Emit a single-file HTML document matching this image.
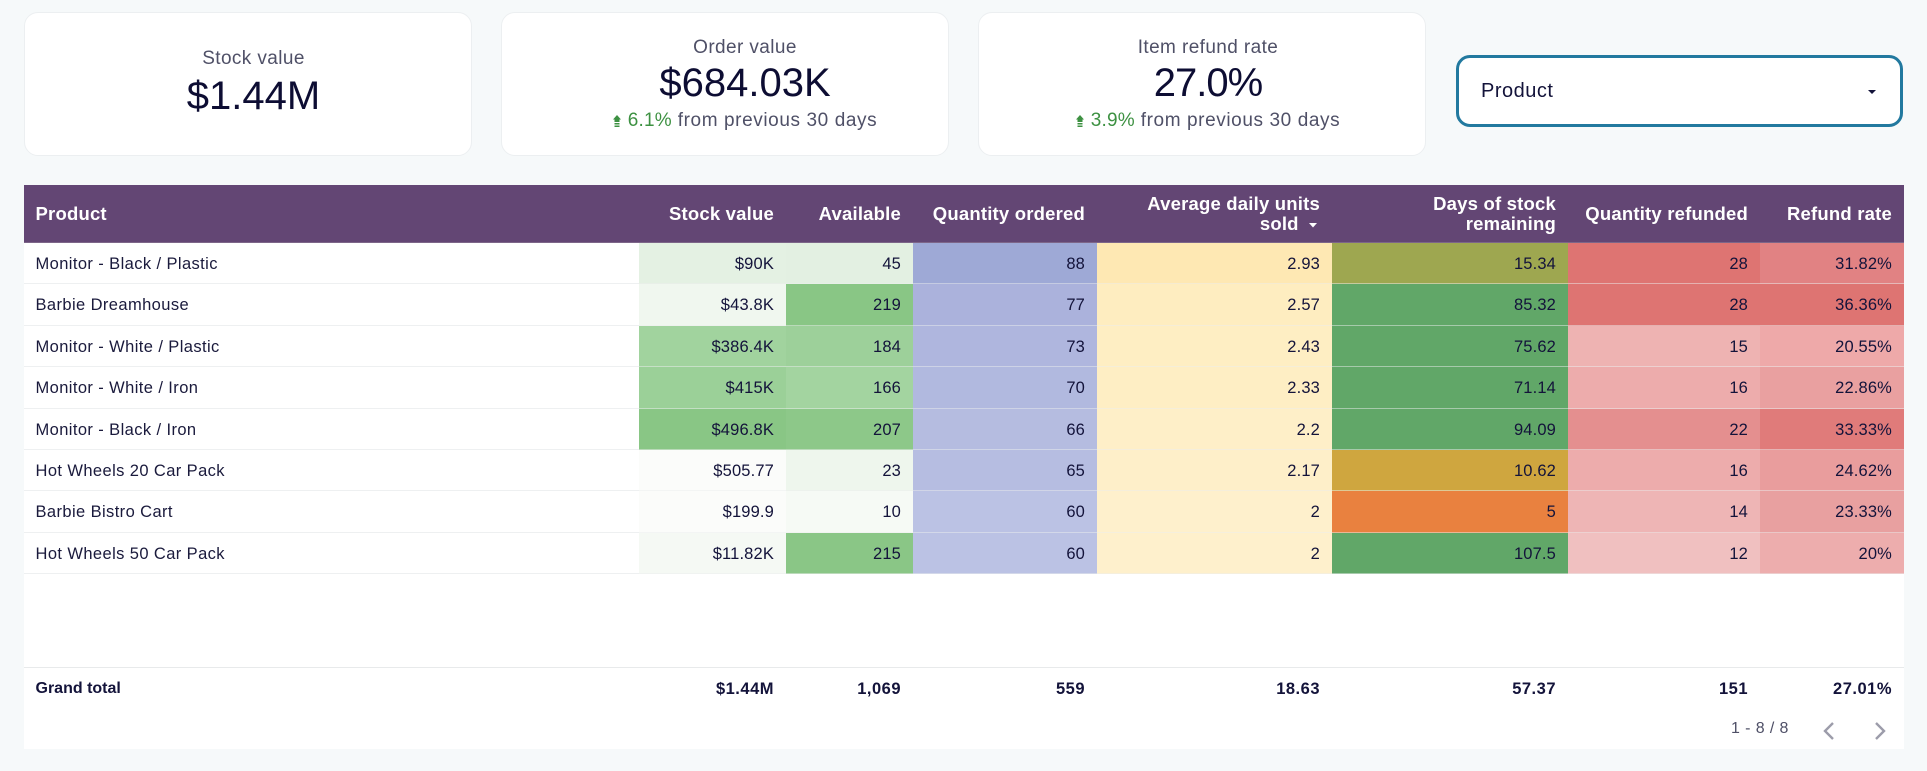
<!DOCTYPE html>
<html><head><meta charset="utf-8"><style>
*{box-sizing:border-box}
html,body{margin:0;padding:0;width:1927px;height:771px;overflow:hidden;background:#f6f9fa;font-family:"Liberation Sans",sans-serif;color:#13133a}
.card{position:absolute;top:12px;height:144px;background:#fff;border:1px solid #eceff1;border-radius:14px;text-align:center}
.card div{position:absolute;left:0;right:0;white-space:nowrap;padding-left:var(--o)}
.lb{font-size:19px;letter-spacing:.4px;line-height:22px;color:#4f5067}
.val{font-size:40px;line-height:46px;color:#0d0d33}
.sub{font-size:19px;letter-spacing:.6px;line-height:22px;color:#4f5067}
.sub b{font-weight:400;color:#3d9142;letter-spacing:.2px}
.sub svg{vertical-align:-2px;margin-right:7px}
#drop{position:absolute;left:1456px;top:55px;width:447px;height:72px;background:#fff;border:3px solid #22799f;border-radius:14px}
#drop span{position:absolute;left:22px;top:22px;font-size:20px;letter-spacing:.5px;line-height:22px;color:#13133a}
#drop i{position:absolute;left:409px;top:32px;border:4px solid transparent;border-top-color:#13133a;border-bottom:0}
#tb{position:absolute;left:24px;top:185px;width:1880px;height:564px;background:#fff}
.c{position:absolute;white-space:nowrap;text-align:right;font-size:16.5px;letter-spacing:.15px}
.r{position:absolute;left:0;width:1880px;height:41.4px}
.r .c{top:0;height:41.4px;line-height:42px;padding-right:12px;border-bottom:1px solid rgba(235,238,238,.5)}
.r .c:first-child{text-align:left;padding-left:11.5px;color:#1a1a3c;letter-spacing:.4px;border-bottom-color:#eef0f1}
#hd{position:absolute;left:0;top:0;width:1880px;height:58px;background:#634674;border-bottom:1px solid #7d6689}
#hd .c{top:0;height:57px;display:flex;align-items:center;justify-content:flex-end;text-align:right;color:#fff;font-weight:700;font-size:18.5px;line-height:20px;padding-right:12px;white-space:normal;letter-spacing:.2px}
#hd .c:first-child{justify-content:flex-start;padding-left:11.5px}
#tot{position:absolute;left:0;top:482px;width:1880px;height:42px;border-top:1px solid #e8eaeb}
#tot .c{top:0;height:40px;line-height:42px;font-weight:700;font-size:16.5px;padding-right:12px;color:#13133a;letter-spacing:.5px}
#tot .c:first-child{text-align:left;padding-left:11.5px;letter-spacing:0;font-size:16px}
.p{position:absolute;font-size:16px;letter-spacing:.4px;line-height:20px;color:#4f5067}
</style></head><body>

<div class="card" style="left:24px;width:448px;--o:11px"><div class="lb" style="top:35px">Stock value</div><div class="val" style="top:60px">$1.44M</div></div>

<div class="card" style="left:501px;width:448px;--o:40px"><div class="lb" style="top:24px">Order value</div><div class="val" style="top:47px">$684.03K</div><div class="sub" style="top:97px"><svg width="8" height="13" viewBox="0 0 8 13"><path d="M4 0l4 4.5H6.5V7h-5V4.5H0zM1.5 8h5v1.5h-5zM1.5 10.5h5V12h-5z" fill="#3d9142"/></svg><b>6.1%</b> from previous 30 days</div></div>

<div class="card" style="left:978px;width:448px;--o:12px"><div class="lb" style="top:24px">Item refund rate</div><div class="val" style="top:47px;letter-spacing:-1px">27.0%</div><div class="sub" style="top:97px"><svg width="8" height="13" viewBox="0 0 8 13"><path d="M4 0l4 4.5H6.5V7h-5V4.5H0zM1.5 8h5v1.5h-5zM1.5 10.5h5V12h-5z" fill="#3d9142"/></svg><b>3.9%</b> from previous 30 days</div></div>

<div id="drop"><span>Product</span><i></i></div>

<div id="tb">
<div id="hd">
<div class="c" style="left:0;width:615px">Product</div>
<div class="c" style="left:615px;width:147px">Stock value</div>
<div class="c" style="left:762px;width:127px">Available</div>
<div class="c" style="left:889px;width:184px">Quantity ordered</div>
<div class="c" style="left:1073px;width:235px"><span>Average daily units<br>sold <svg width="8" height="5" viewBox="0 0 8 5" style="margin:0 3px 2px 5px"><path d="M0 0h8L4 4.5z" fill="#fff"/></svg></span></div>
<div class="c" style="left:1308px;width:236px"><span>Days of stock<br>remaining</span></div>
<div class="c" style="left:1544px;width:192px">Quantity refunded</div>
<div class="c" style="left:1736px;width:144px">Refund rate</div>
</div>

<div class="r" style="top:58px">
<div class="c" style="left:0;width:615px">Monitor - Black / Plastic</div>
<div class="c" style="left:615px;width:147px;background:#e4f1e3">$90K</div>
<div class="c" style="left:762px;width:127px;background:#e3f0e2">45</div>
<div class="c" style="left:889px;width:184px;background:#9ea9d6">88</div>
<div class="c" style="left:1073px;width:235px;background:#fee8b3">2.93</div>
<div class="c" style="left:1308px;width:236px;background:#9ea750">15.34</div>
<div class="c" style="left:1544px;width:192px;background:#de7472">28</div>
<div class="c" style="left:1736px;width:144px;background:#e18283">31.82%</div>
</div>
<div class="r" style="top:99.4px">
<div class="c" style="left:0;width:615px">Barbie Dreamhouse</div>
<div class="c" style="left:615px;width:147px;background:#f0f7ef">$43.8K</div>
<div class="c" style="left:762px;width:127px;background:#89c685">219</div>
<div class="c" style="left:889px;width:184px;background:#abb2dc">77</div>
<div class="c" style="left:1073px;width:235px;background:#feedc0">2.57</div>
<div class="c" style="left:1308px;width:236px;background:#61a768">85.32</div>
<div class="c" style="left:1544px;width:192px;background:#de7472">28</div>
<div class="c" style="left:1736px;width:144px;background:#de7472">36.36%</div>
</div>
<div class="r" style="top:140.8px">
<div class="c" style="left:0;width:615px">Monitor - White / Plastic</div>
<div class="c" style="left:615px;width:147px;background:#a1d39e">$386.4K</div>
<div class="c" style="left:762px;width:127px;background:#9dd09a">184</div>
<div class="c" style="left:889px;width:184px;background:#afb6de">73</div>
<div class="c" style="left:1073px;width:235px;background:#feeec3">2.43</div>
<div class="c" style="left:1308px;width:236px;background:#61a768">75.62</div>
<div class="c" style="left:1544px;width:192px;background:#eeb3b2">15</div>
<div class="c" style="left:1736px;width:144px;background:#eea9a9">20.55%</div>
</div>
<div class="r" style="top:182.2px">
<div class="c" style="left:0;width:615px">Monitor - White / Iron</div>
<div class="c" style="left:615px;width:147px;background:#9bd098">$415K</div>
<div class="c" style="left:762px;width:127px;background:#a3d4a0">166</div>
<div class="c" style="left:889px;width:184px;background:#b1b9df">70</div>
<div class="c" style="left:1073px;width:235px;background:#feeec4">2.33</div>
<div class="c" style="left:1308px;width:236px;background:#61a768">71.14</div>
<div class="c" style="left:1544px;width:192px;background:#edacac">16</div>
<div class="c" style="left:1736px;width:144px;background:#e9a0a0">22.86%</div>
</div>
<div class="r" style="top:223.6px">
<div class="c" style="left:0;width:615px">Monitor - Black / Iron</div>
<div class="c" style="left:615px;width:147px;background:#89c685">$496.8K</div>
<div class="c" style="left:762px;width:127px;background:#8dc889">207</div>
<div class="c" style="left:889px;width:184px;background:#b5bce0">66</div>
<div class="c" style="left:1073px;width:235px;background:#feefc8">2.2</div>
<div class="c" style="left:1308px;width:236px;background:#61a768">94.09</div>
<div class="c" style="left:1544px;width:192px;background:#e48f8f">22</div>
<div class="c" style="left:1736px;width:144px;background:#e07b7a">33.33%</div>
</div>
<div class="r" style="top:265px">
<div class="c" style="left:0;width:615px">Hot Wheels 20 Car Pack</div>
<div class="c" style="left:615px;width:147px;background:#fbfcfa">$505.77</div>
<div class="c" style="left:762px;width:127px;background:#eef6ed">23</div>
<div class="c" style="left:889px;width:184px;background:#b6bde1">65</div>
<div class="c" style="left:1073px;width:235px;background:#feefc9">2.17</div>
<div class="c" style="left:1308px;width:236px;background:#cfa63f">10.62</div>
<div class="c" style="left:1544px;width:192px;background:#edacac">16</div>
<div class="c" style="left:1736px;width:144px;background:#e99d9d">24.62%</div>
</div>
<div class="r" style="top:306.4px">
<div class="c" style="left:0;width:615px">Barbie Bistro Cart</div>
<div class="c" style="left:615px;width:147px;background:#fbfcfa">$199.9</div>
<div class="c" style="left:762px;width:127px;background:#f6faf5">10</div>
<div class="c" style="left:889px;width:184px;background:#bbc2e4">60</div>
<div class="c" style="left:1073px;width:235px;background:#fef0cc">2</div>
<div class="c" style="left:1308px;width:236px;background:#e9813f">5</div>
<div class="c" style="left:1544px;width:192px;background:#eeb5b5">14</div>
<div class="c" style="left:1736px;width:144px;background:#e8a0a0">23.33%</div>
</div>
<div class="r" style="top:347.8px">
<div class="c" style="left:0;width:615px">Hot Wheels 50 Car Pack</div>
<div class="c" style="left:615px;width:147px;background:#f5f9f4">$11.82K</div>
<div class="c" style="left:762px;width:127px;background:#8ac686">215</div>
<div class="c" style="left:889px;width:184px;background:#bbc2e4">60</div>
<div class="c" style="left:1073px;width:235px;background:#fef0cc">2</div>
<div class="c" style="left:1308px;width:236px;background:#61a768">107.5</div>
<div class="c" style="left:1544px;width:192px;background:#f0c0c0">12</div>
<div class="c" style="left:1736px;width:144px;background:#edadad">20%</div>
</div>

<div id="tot">
<div class="c" style="left:0;width:615px">Grand total</div>
<div class="c" style="left:615px;width:147px">$1.44M</div>
<div class="c" style="left:762px;width:127px">1,069</div>
<div class="c" style="left:889px;width:184px">559</div>
<div class="c" style="left:1073px;width:235px">18.63</div>
<div class="c" style="left:1308px;width:236px">57.37</div>
<div class="c" style="left:1544px;width:192px">151</div>
<div class="c" style="left:1736px;width:144px">27.01%</div>
</div>
<div class="p" style="left:1707px;top:534px">1 - 8 / 8</div>
<svg style="position:absolute;left:1798px;top:537px" width="14" height="18" viewBox="0 0 14 18"><path d="M11 1L3 9l8 8" fill="none" stroke="#9c9caa" stroke-width="2.4"/></svg>
<svg style="position:absolute;left:1849px;top:537px" width="14" height="18" viewBox="0 0 14 18"><path d="M3 1l8 8-8 8" fill="none" stroke="#9c9caa" stroke-width="2.4"/></svg>
</div>
</body></html>
